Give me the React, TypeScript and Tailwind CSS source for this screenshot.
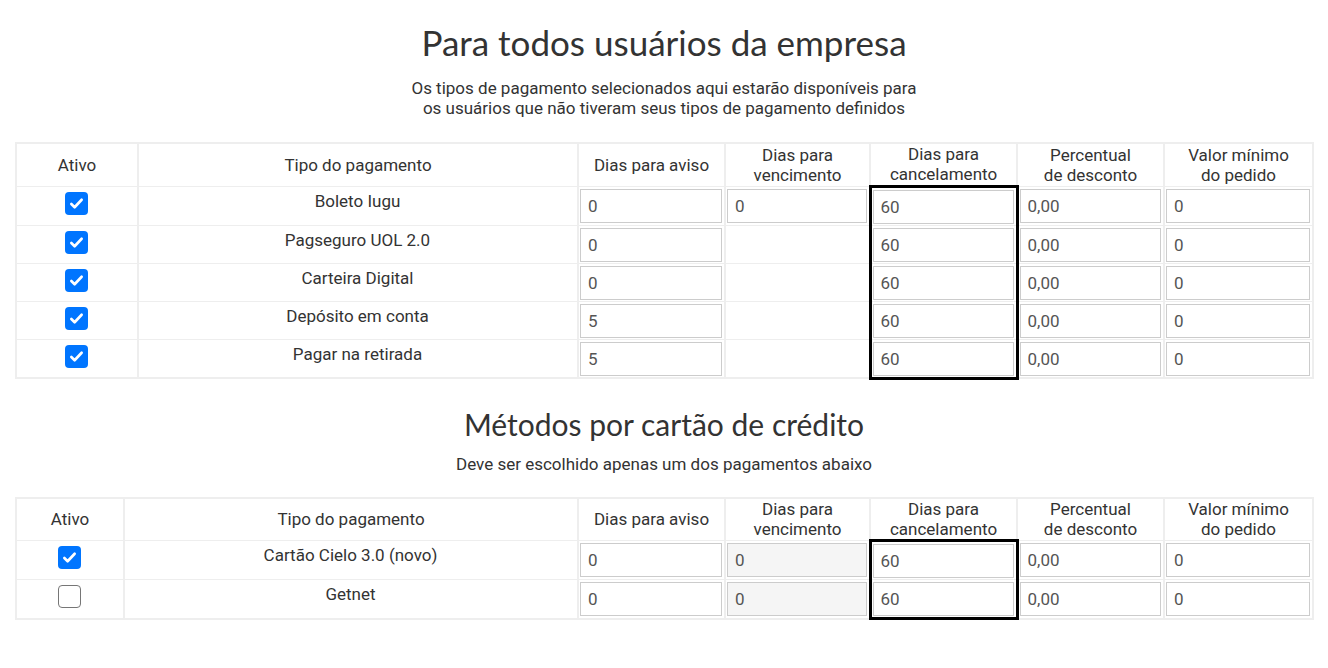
import React from "react";

type Row = {
  name: string;
  checked: boolean;
  aviso: string;
  venc: string | null;
  cancel: string;
  perc: string;
  valor: string;
};

const empresaRows: Row[] = [
  { name: "Boleto Iugu", checked: true, aviso: "0", venc: "0", cancel: "60", perc: "0,00", valor: "0" },
  { name: "Pagseguro UOL 2.0", checked: true, aviso: "0", venc: null, cancel: "60", perc: "0,00", valor: "0" },
  { name: "Carteira Digital", checked: true, aviso: "0", venc: null, cancel: "60", perc: "0,00", valor: "0" },
  { name: "Depósito em conta", checked: true, aviso: "5", venc: null, cancel: "60", perc: "0,00", valor: "0" },
  { name: "Pagar na retirada", checked: true, aviso: "5", venc: null, cancel: "60", perc: "0,00", valor: "0" },
];

const cartaoRows: Row[] = [
  { name: "Cartão Cielo 3.0 (novo)", checked: true, aviso: "0", venc: "0", cancel: "60", perc: "0,00", valor: "0" },
  { name: "Getnet", checked: false, aviso: "0", venc: "0", cancel: "60", perc: "0,00", valor: "0" },
];

function Checkbox({ checked }: { checked: boolean }) {
  if (!checked) {
    return <span className="inline-block w-[23px] h-[23px] rounded-[4px] border border-[#767676] bg-white" />;
  }
  return (
    <span className="inline-flex items-center justify-center w-[23px] h-[23px] rounded-[4px] bg-[#0075ff]">
      <svg width="15" height="15" viewBox="0 0 16 16" fill="none">
        <path d="M2.5 8.5l3.5 3.5 7.5-8" stroke="white" strokeWidth="2.8" strokeLinecap="round" strokeLinejoin="round" />
      </svg>
    </span>
  );
}

function Field({ value, disabled }: { value: string; disabled?: boolean }) {
  return (
    <input
      readOnly
      value={value}
      className={`block w-full h-[34px] px-[7px] border border-[#cccccc] text-[17px] text-[#555] outline-none ${
        disabled ? "bg-[#f5f5f5]" : "bg-white"
      }`}
    />
  );
}

function PaymentTable({ rows, firstCol, secondCol, disabledVenc }: {
  rows: Row[];
  firstCol: string;
  secondCol: string;
  disabledVenc?: boolean;
}) {
  const th = "border-x-2 border-y border-[#eeeeee] font-normal text-center align-middle leading-[20px] px-1 py-0";
  const td = "border-x-2 border-y border-[#eeeeee] pl-[1px] pr-[2px] pt-[2px] pb-[1px] align-top";
  return (
    <table className="w-full table-fixed border-collapse border-2 border-[#eeeeee] text-[17px] text-[#333]">
      <colgroup>
        <col className={firstCol} />
        <col className={secondCol} />
        <col className="w-[147px]" />
        <col className="w-[145px]" />
        <col className="w-[147px]" />
        <col className="w-[147px]" />
        <col className="w-[149px]" />
      </colgroup>
      <thead>
        <tr className="h-[43px]">
          <th className={th}>Ativo</th>
          <th className={th}>Tipo do pagamento</th>
          <th className={th}>Dias para aviso</th>
          <th className={th}>Dias para<br />vencimento</th>
          <th className={th}>Dias para<br />cancelamento</th>
          <th className={th}>Percentual<br />de desconto</th>
          <th className={th}>Valor mínimo<br />do pedido</th>
        </tr>
      </thead>
      <tbody>
        {rows.map((r, i) => (
          <tr key={r.name}>
            <td className={`${td} text-center !pt-[5px]`}>
              <Checkbox checked={r.checked} />
            </td>
            <td className={`${td} text-center !pt-[4px] leading-[20px]`}>{r.name}</td>
            <td className={td}>
              <Field value={r.aviso} />
            </td>
            <td className={td}>{r.venc !== null && <Field value={r.venc} disabled={disabledVenc} />}</td>
            <td
              className={`${td} !border-x-[3px] !border-x-black ${i === 0 ? "!border-t-[3px] !border-t-black" : ""} ${
                i === rows.length - 1 ? "!border-b-[3px] !border-b-black" : ""
              }`}
            >
              <Field value={r.cancel} />
            </td>
            <td className={td}>
              <Field value={r.perc} />
            </td>
            <td className={td}>
              <Field value={r.valor} />
            </td>
          </tr>
        ))}
      </tbody>
    </table>
  );
}

export default function App() {
  return (
    <div className="min-h-screen bg-white px-[15px] pb-10 text-[#333] font-['Roboto',sans-serif]">
      <h1 className="pt-[22px] text-center text-[35px] leading-[40px] font-normal font-['Lato',sans-serif] text-[#333]">
        Para todos usuários da empresa
      </h1>
      <p className="mt-[16px] text-center text-[17px] leading-[20px]">
        Os tipos de pagamento selecionados aqui estarão disponíveis para
        <br />
        os usuários que não tiveram seus tipos de pagamento definidos
      </p>
      <div className="mt-[24px]">
        <PaymentTable rows={empresaRows} firstCol="w-[122px]" secondCol="w-[440px]" />
      </div>

      <h2 className="mt-[28px] text-center text-[30px] leading-[33px] font-normal font-['Lato',sans-serif] text-[#333]">
        Métodos por cartão de crédito
      </h2>
      <p className="mt-[13px] text-center text-[17px] leading-[20px]">Deve ser escolhido apenas um dos pagamentos abaixo</p>
      <div className="mt-[23px]">
        <PaymentTable rows={cartaoRows} firstCol="w-[108px]" secondCol="w-[454px]" disabledVenc />
      </div>
    </div>
  );
}
